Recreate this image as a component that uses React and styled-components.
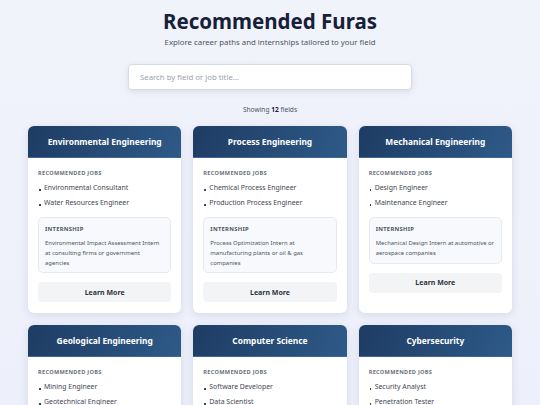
import React from "react";
import styled, { createGlobalStyle } from "styled-components";

const fields = [
  {
    id: 1,
    title: "Environmental Engineering",
    jobs: ["Environmental Consultant", "Water Resources Engineer"],
    internship:
      "Environmental Impact Assessment Intern at consulting firms or government agencies",
  },
  {
    id: 2,
    title: "Process Engineering",
    jobs: ["Chemical Process Engineer", "Production Process Engineer"],
    internship:
      "Process Optimization Intern at manufacturing plants or oil & gas companies",
  },
  {
    id: 3,
    title: "Mechanical Engineering",
    jobs: ["Design Engineer", "Maintenance Engineer"],
    internship: "Mechanical Design Intern at automotive or aerospace companies",
  },
  {
    id: 4,
    title: "Geological Engineering",
    jobs: ["Mining Engineer", "Geotechnical Engineer"],
    internship: "Field Geology Intern at mining or exploration companies",
  },
  {
    id: 5,
    title: "Computer Science",
    jobs: ["Software Developer", "Data Scientist"],
    internship: "Software Engineering Intern at tech companies or startups",
  },
  {
    id: 6,
    title: "Cybersecurity",
    jobs: ["Security Analyst", "Penetration Tester"],
    internship: "Security Operations Intern at banks or IT security firms",
  },
];

const GlobalStyle = createGlobalStyle`
  body {
    margin: 0;
    background: linear-gradient(180deg, #f1f3fb 0%, #eceffa 100%);
    font-family: "Noto Sans", "Open Sans", sans-serif;
    color: #1f2937;
  }
`;

const App = () => {
  return (
    <Page>
      <GlobalStyle />
      <Header>
        <Title>Recommended Furas</Title>
        <Subtitle>Explore career paths and internships tailored to your field</Subtitle>
        <Search placeholder="Search by field or job title..." />
        <Count>
          Showing <strong>12</strong> fields
        </Count>
      </Header>
      <Grid>
        {fields.map((field) => (
          <Card key={field.id}>
            <CardHead>{field.title}</CardHead>
            <CardBody>
              <Label>Recommended Jobs</Label>
              <JobList>
                {field.jobs.map((job) => (
                  <Job key={job}>{job}</Job>
                ))}
              </JobList>
              <Internship>
                <InternLabel>Internship</InternLabel>
                <InternText>{field.internship}</InternText>
              </Internship>
              <LearnButton>Learn More</LearnButton>
            </CardBody>
          </Card>
        ))}
      </Grid>
    </Page>
  );
};

const Page = styled.div`
  min-height: 405px;
  padding: 6px 28px 20px;
  box-sizing: border-box;
`;

const Header = styled.header`
  display: flex;
  flex-direction: column;
  align-items: center;
`;

const Title = styled.h1`
  margin: 0;
  font-size: 20.5px;
  line-height: 30px;
  font-weight: 700;
  color: #172039;
`;

const Subtitle = styled.p`
  margin: 0;
  font-size: 7.8px;
  line-height: 12px;
  color: #4b5563;
`;

const Search = styled.input`
  margin-top: 16px;
  width: 284px;
  height: 26px;
  box-sizing: border-box;
  padding: 0 11px;
  border: 1px solid #d6dae3;
  border-radius: 4px;
  background: #fff;
  box-shadow: 0 2px 6px rgba(30, 45, 90, 0.1);
  font-family: inherit;
  font-size: 7.8px;
  outline: none;
  &::placeholder {
    color: #9aa1ad;
  }
`;

const Count = styled.p`
  margin: 15px 0 0;
  font-size: 6.6px;
  line-height: 10px;
  color: #4b5563;
  strong {
    color: #172039;
    font-weight: 700;
  }
`;

const Grid = styled.div`
  margin-top: 11px;
  display: grid;
  grid-template-columns: repeat(3, 1fr);
  gap: 12px;
`;

const Card = styled.div`
  background: #fff;
  border-radius: 6px;
  overflow: hidden;
  box-shadow: 0 2px 8px rgba(30, 50, 100, 0.12);
`;

const CardHead = styled.div`
  height: 31px;
  display: flex;
  align-items: center;
  justify-content: center;
  background: linear-gradient(110deg, #1e3c64 0%, #2e5a88 100%);
  border-bottom: 1px solid #3d6896;
  color: #fff;
  font-size: 8.4px;
  font-weight: 700;
`;

const CardBody = styled.div`
  padding: 11px 10px 11px;
`;

const Label = styled.div`
  font-size: 5.6px;
  line-height: 8px;
  font-weight: 700;
  letter-spacing: 0.3px;
  text-transform: uppercase;
  color: #6b7280;
`;

const JobList = styled.ul`
  list-style: none;
  margin: 3px 0 0;
  padding: 0;
`;

const Job = styled.li`
  position: relative;
  padding-left: 6px;
  font-size: 6.9px;
  line-height: 15px;
  color: #3f4654;
  &::before {
    content: "";
    position: absolute;
    left: 1px;
    top: 9px;
    width: 1.5px;
    height: 1.5px;
    background: #3f4654;
  }
`;

const Internship = styled.div`
  margin-top: 7px;
  padding: 7px 6px 4px;
  background: #f8f9fc;
  border: 1px solid #e6e9f0;
  border-radius: 5px;
`;

const InternLabel = styled.div`
  font-size: 5.8px;
  line-height: 8px;
  font-weight: 700;
  letter-spacing: 0.3px;
  text-transform: uppercase;
  color: #4b5563;
`;

const InternText = styled.p`
  margin: 6px 0 0;
  font-size: 5.9px;
  line-height: 9.8px;
  color: #4b5563;
`;

const LearnButton = styled.button`
  margin-top: 9px;
  width: 100%;
  height: 20px;
  border: none;
  border-radius: 4px;
  background: #f3f4f6;
  font-family: inherit;
  font-size: 7px;
  font-weight: 700;
  color: #2d3340;
`;

export default App;
